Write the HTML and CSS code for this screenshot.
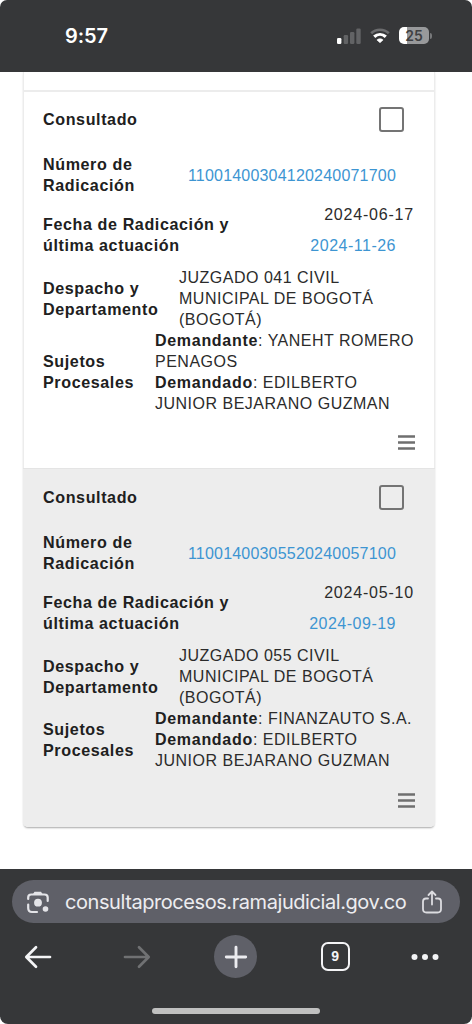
FILE: index.html
```html
<!DOCTYPE html>
<html lang="es">
<head>
    <meta charset="UTF-8">
    <meta name="viewport" content="width=device-width, initial-scale=1.0">
    <title>Consulta de Procesos</title>
    <link rel="stylesheet" href="styles.css">
</head>
<body>

<header class="status-bar">
    <span class="time">9:57</span>
    <div class="status-icons">
        <svg class="signal" width="24" height="16" viewBox="0 0 24 16">
            <rect x="0" y="10" width="4.4" height="6" rx="1.2" fill="#fff"/>
            <rect x="6.7" y="7" width="4.4" height="9" rx="1.2" fill="#626365"/>
            <rect x="13" y="4" width="4.4" height="12" rx="1.2" fill="#626365"/>
            <rect x="19.3" y="0.5" width="4.4" height="15.5" rx="1.2" fill="#626365"/>
        </svg>
        <svg class="wifi" width="20" height="15" viewBox="0 0 20 15">
            <path d="M1.2 5.2C6 .6 14 .6 18.8 5.2" fill="none" stroke="#6b6c6e" stroke-width="2.7"/>
            <path d="M4.2 8.8C7.600 5.700 12.400 5.700 15.800 8.800" fill="none" stroke="#fff" stroke-width="3.200"/>
            <path d="M10 14.700L6.900 11.900C8.600 10.400 11.400 10.400 13.100 11.900Z" fill="#fff" stroke="#fff" stroke-width="0.600"/>
        </svg>
        <div class="battery"><span class="battery-level">25</span></div>
        <div class="battery-tip"></div>
    </div>
</header>

<main class="page">
    <div class="table">
        <div class="previous"></div>

        <section class="process">
            <div class="row row-check">
                <div class="label">Consultado</div>
                <div class="checkbox"></div>
            </div>
            <div class="row">
                <div class="label">Número de<br>Radicación</div>
                <a class="link number">11001400304120240071700</a>
            </div>
            <div class="row row-dates">
                <div class="label">Fecha de Radicación y<br>última actuación</div>
                <div class="dates">
                    <span class="filed">2024-06-17</span>
                    <a class="link">2024-11-26</a>
                </div>
            </div>
            <div class="row row-text">
                <div class="label">Despacho y<br>Departamento</div>
                <div class="office">JUZGADO 041 CIVIL<br>MUNICIPAL DE BOGOTÁ<br>(BOGOTÁ)</div>
            </div>
            <div class="row row-text">
                <div class="label">Sujetos<br>Procesales</div>
                <div class="parties"><b>Demandante</b>: YANEHT ROMERO<br>PENAGOS<br><b>Demandado</b>: EDILBERTO<br>JUNIOR BEJARANO GUZMAN</div>
            </div>
            <div class="row row-menu">
                <svg width="17" height="15" viewBox="0 0 17 15"><path d="M0 1.5H17M0 7.5H17M0 13.5H17" stroke="#6f6f6f" stroke-width="2.4"/></svg>
            </div>
        </section>

        <section class="process selected">
            <div class="row row-check">
                <div class="label">Consultado</div>
                <div class="checkbox"></div>
            </div>
            <div class="row">
                <div class="label">Número de<br>Radicación</div>
                <a class="link number">11001400305520240057100</a>
            </div>
            <div class="row row-dates">
                <div class="label">Fecha de Radicación y<br>última actuación</div>
                <div class="dates">
                    <span class="filed">2024-05-10</span>
                    <a class="link">2024-09-19</a>
                </div>
            </div>
            <div class="row row-text">
                <div class="label">Despacho y<br>Departamento</div>
                <div class="office">JUZGADO 055 CIVIL<br>MUNICIPAL DE BOGOTÁ<br>(BOGOTÁ)</div>
            </div>
            <div class="row row-text">
                <div class="label">Sujetos<br>Procesales</div>
                <div class="parties"><b>Demandante</b>: FINANZAUTO S.A.<br><b>Demandado</b>: EDILBERTO<br>JUNIOR BEJARANO GUZMAN</div>
            </div>
            <div class="row row-menu">
                <svg width="17" height="15" viewBox="0 0 17 15"><path d="M0 1.5H17M0 7.5H17M0 13.5H17" stroke="#6f6f6f" stroke-width="2.4"/></svg>
            </div>
        </section>
    </div>
</main>

<footer class="browser-bar">
    <div class="address">
        <svg width="24" height="24" viewBox="0 0 24 24" fill="none" stroke="#e4e4e8" stroke-width="2.2" stroke-linecap="round">
            <path d="M2.2 9V7.5Q2.2 4.500 5.200 4.500H18.500Q21.700 4.500 21.700 7.500V11"/>
            <path d="M2.200 14.500V18Q2.200 22 6 22H11"/>
            <path d="M8.500 1.800H15L16.800 4.500H6.700Z" fill="#e4e4e8" stroke="none"/>
            <circle cx="12" cy="12.700" r="3.900" fill="#e4e4e8" stroke="none"/>
            <circle cx="19.500" cy="19" r="2.800" fill="#e4e4e8" stroke="none"/>
        </svg>
        <span class="url">consultaprocesos.ramajudicial.gov.co</span>
        <svg class="share" width="20" height="24" viewBox="0 0 20 24" fill="none" stroke="#dcdce0" stroke-width="1.8" stroke-linecap="round" stroke-linejoin="round">
            <path d="M6 8.500H4Q1 8.500 1 11.500V19Q1 22.500 4.500 22.500H15.500Q19 22.500 19 19V11.500Q19 8.500 16 8.500H14"/>
            <path d="M10 14.500V1.500M6.500 5L10 1.500L13.500 5"/>
        </svg>
    </div>
    <nav class="toolbar">
        <div class="tool">
            <svg width="28" height="24" viewBox="0 0 28 24" fill="none" stroke="#f4f4f6" stroke-width="2.7" stroke-linecap="round" stroke-linejoin="round"><path d="M26 12H2.500M12 2.300L2.300 12L12 21.700"/></svg>
        </div>
        <div class="tool">
            <svg width="28" height="24" viewBox="0 0 28 24" fill="none" stroke="#707173" stroke-width="2.7" stroke-linecap="round" stroke-linejoin="round"><path d="M2 12H25.500M16 2.300L25.700 12L16 21.700"/></svg>
        </div>
        <div class="tool">
            <div class="new-tab">
                <svg width="24" height="24" viewBox="0 0 24 24"><path d="M12 2.300V21.700M2.300 12H21.700" stroke="#ececf0" stroke-width="2.9" stroke-linecap="round"/></svg>
            </div>
        </div>
        <div class="tool"><div class="tabs">9</div></div>
        <div class="tool more">
            <svg width="28" height="8" viewBox="0 0 28 8" fill="#f4f4f6"><circle cx="3.500" cy="4" r="3"/><circle cx="14" cy="4" r="3"/><circle cx="24.500" cy="4" r="3"/></svg>
        </div>
    </nav>
    <div class="home-indicator"></div>
</footer>

</body>
</html>
```
FILE: styles.css
```css
* {
    box-sizing: border-box;
}
body {
    margin: 0;
    height: 1024px;
    display: flex;
    flex-direction: column;
    background-color: #fff;
    color: #2b2b2b;
    font-family: "Liberation Sans", Arial, sans-serif;
    font-size: 16px;
    line-height: 21px;
    overflow: hidden;
}
svg {
    display: block;
}

/* phone status bar */
.status-bar {
    height: 72px;
    padding: 0 40px 0 65px;
    display: flex;
    justify-content: space-between;
    background-color: #363739;
    border-radius: 7px 7px 0 0;
}
.time {
    padding-top: 24px;
    color: #fff;
    font-family: Inter, sans-serif;
    font-size: 20px;
    font-weight: 600;
    letter-spacing: -0.1px;
    line-height: 24px;
}
.status-icons {
    display: flex;
    height: 72px;
    align-items: center;
    padding-bottom: 1px;
}
.wifi {
    margin: 0 9px;
}
.battery {
    width: 30px;
    height: 17px;
    border-radius: 5px;
    background: linear-gradient(to right, #fff 8px, #98999b 8px);
    color: #3f4042;
    font-family: Inter, sans-serif;
    font-size: 14px;
    font-weight: 600;
    line-height: 17px;
    text-align: center;
}
.battery-tip {
    width: 2px;
    height: 6px;
    margin-left: 1px;
    background-color: #77787a;
    border-radius: 0 2px 2px 0;
}

/* results table */
.page {
    height: 797px;
    padding: 0 37px 0 23px;
    overflow: hidden;
}
.table {
    height: 755px;
    border-radius: 0 0 5px 5px;
    border: 1px solid #ececec;
    border-width: 0 1px;
    box-shadow: 0 2px 2px -1px #aaa, 0 0 2px #e6e6e6;
}
.previous {
    height: 20px;
    border-bottom: 2px solid #ececec;
}
.process {
    padding: 0 20px 0 19px;
}
.selected {
    height: 359px;
    margin: 0 -1px;
    padding: 1px 21px 0 20px;
    background-color: #ededed;
    border-top: 1px solid #e4e4e4;
    border-radius: 0 0 5px 5px;
}
.row {
    height: 56px;
    display: flex;
    align-items: center;
    justify-content: space-between;
    letter-spacing: 0.5px;
    white-space: nowrap;
}
.row-check {
    height: 55px;
}
.row-dates {
    height: 64px;
}
.row-text {
    height: auto;
}
.row-menu {
    height: 54px;
    padding-top: 2px;
    margin-right: -1px;
    justify-content: flex-end;
}
.selected .row-menu {
    padding-top: 4px;
}
.label,
.row b {
    color: #202020;
    font-weight: bold;
    letter-spacing: 0.6px;
}
.label {
    font-size: 16.1px;
}
.row b {
    letter-spacing: 0.7px;
}
.checkbox {
    width: 25px;
    height: 25px;
    margin-right: 10px;
    border: 2px solid #747474;
    border-radius: 3px;
}
.link {
    color: #3d95d2;
    padding-right: 18px;
}
.number {
    letter-spacing: 0.2px;
}
.dates {
    display: flex;
    flex-direction: column;
    align-items: flex-end;
    gap: 10px;
    padding-bottom: 10px;
}
.filed {
    letter-spacing: 0.8px;
}
.office {
    width: 235px;
}
.parties {
    width: 259px;
}

/* browser controls */
.browser-bar {
    height: 155px;
    padding: 11px 12px 0;
    background-color: #363739;
    border-radius: 0 0 8px 8px;
}
.address {
    height: 43px;
    padding: 0 18px 0 14px;
    display: flex;
    align-items: center;
    background-color: #5f6068;
    border-radius: 22px;
}
.url {
    margin-left: 15px;
    color: #ededf0;
    font-family: Inter, sans-serif;
    font-size: 20px;
    letter-spacing: -0.43px;
    line-height: 24px;
    white-space: nowrap;
}
.share {
    margin-left: auto;
}
.toolbar {
    margin: 12px -24px 0;
    height: 43px;
    display: grid;
    grid-template-columns: repeat(5, 1fr);
    align-items: center;
    justify-items: center;
}
.new-tab {
    width: 43px;
    height: 43px;
    display: flex;
    align-items: center;
    justify-content: center;
    background-color: #5f6068;
    border-radius: 50%;
}
.tabs {
    width: 29px;
    height: 29px;
    border: 2px solid #f4f4f6;
    border-radius: 7px;
    color: #f4f4f6;
    font-size: 14px;
    font-weight: bold;
    line-height: 25px;
    text-align: center;
}
.more {
    margin-right: 18px;
}
.home-indicator {
    width: 168px;
    height: 6px;
    margin: 30px auto 0;
    background-color: #c0c0c0;
    border-radius: 3px;
}
```
